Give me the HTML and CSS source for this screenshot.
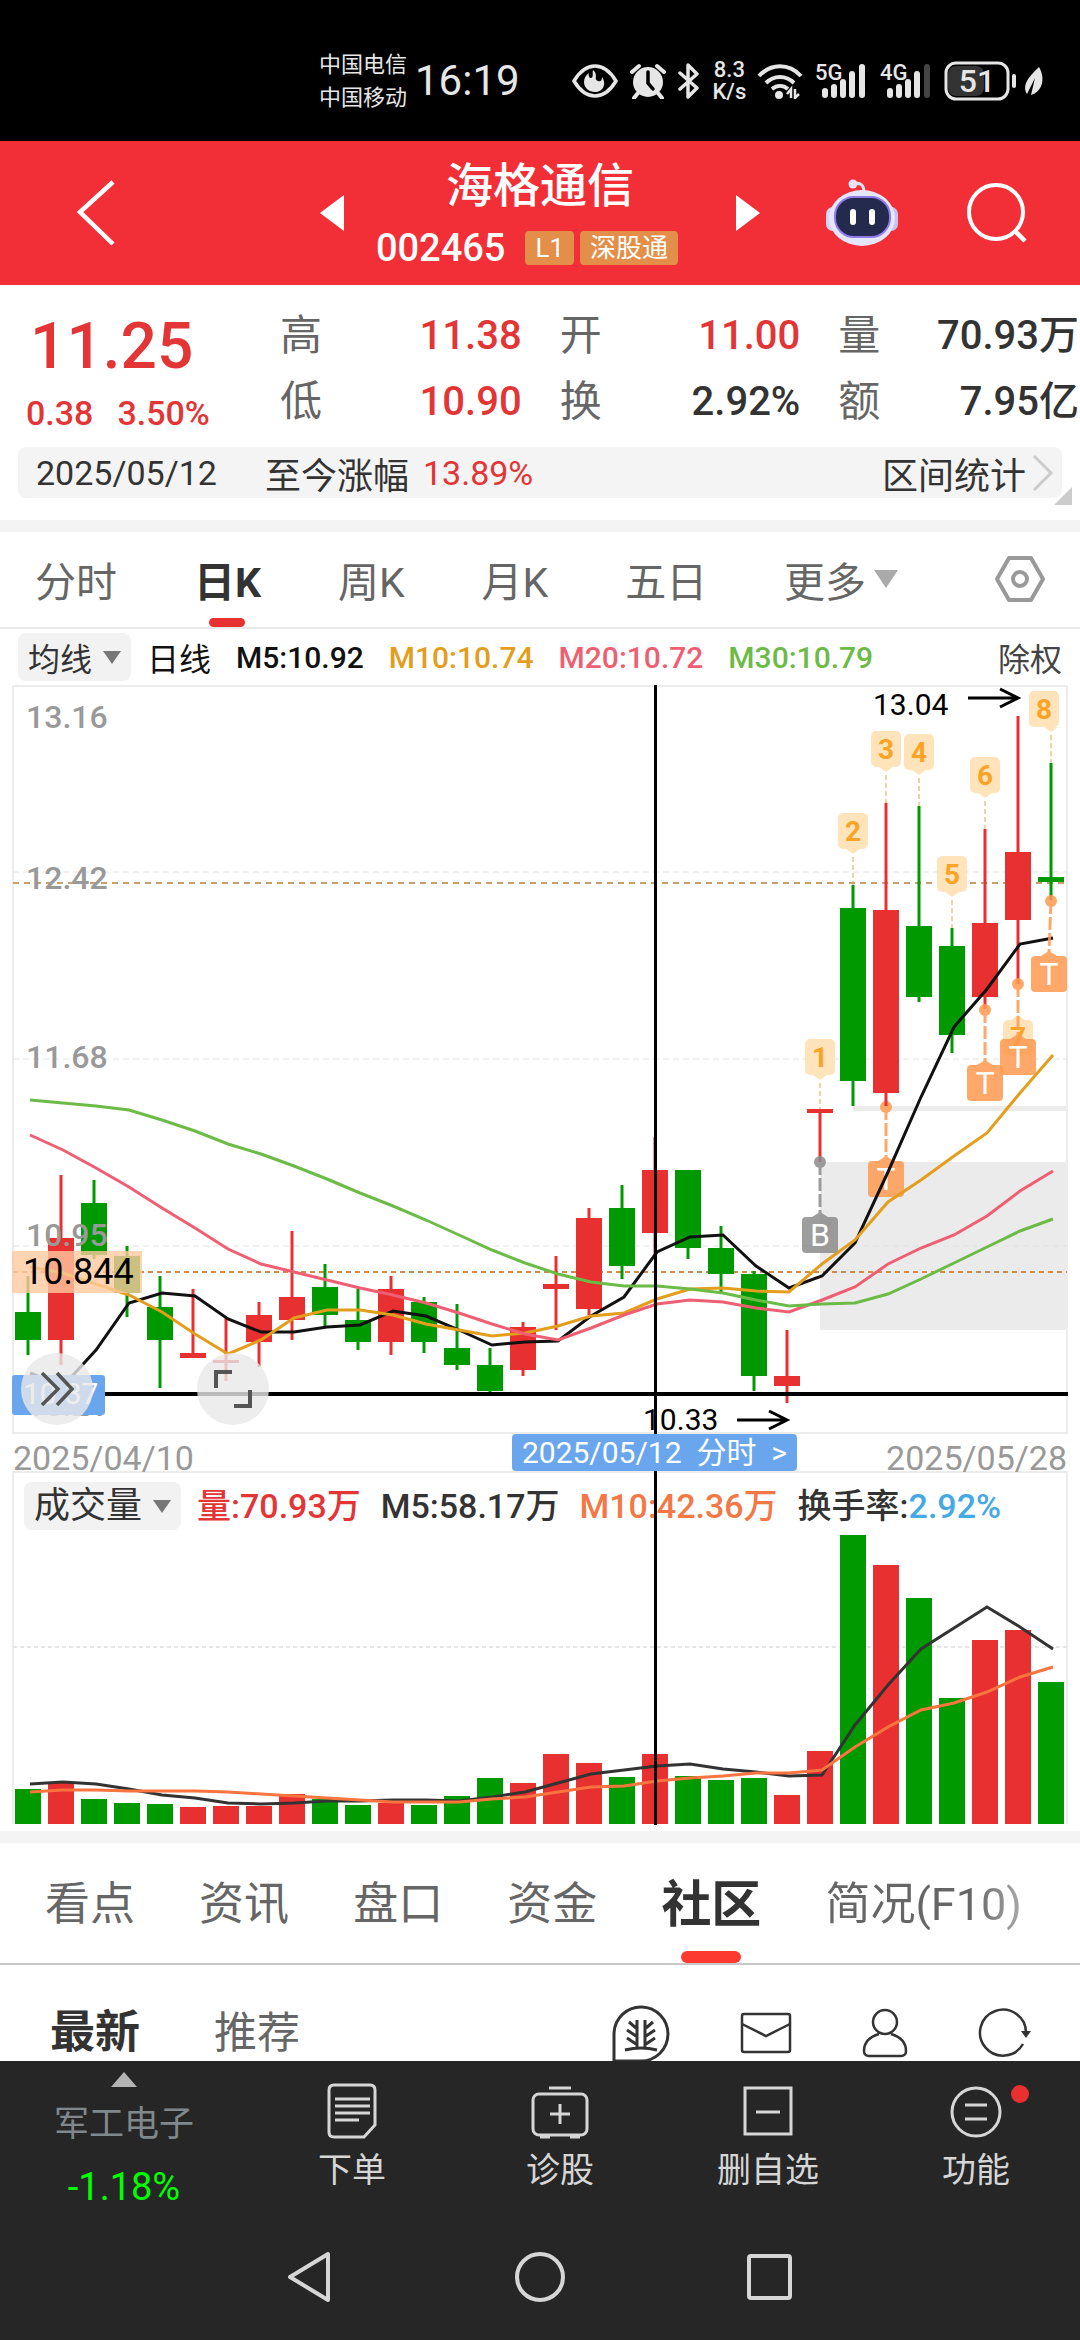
FILE: index.html
```html
<!DOCTYPE html>
<html lang="zh-CN">
<head>
    <meta charset="UTF-8">
    <meta name="viewport" content="width=device-width, initial-scale=1.0">
    <title>海格通信 002465</title>
    <link rel="stylesheet" href="styles.css">
</head>
<body>
    <div class="status">
        <div class="carriers"><span>中国电信</span><span>中国移动</span></div>
        <span class="clock">16:19</span>
        <div class="status-icons">
            <svg width="46" height="36" viewBox="0 0 46 36">
                <path d="M2 18C8 8 15 3 23 3s15 5 21 15c-6 10-13 15-21 15S8 28 2 18z" fill="none" stroke="#e6e6e6" stroke-width="3.5"/>
                <path d="M21 7c6 5 0 9 5 11 3 1 4-1 4-4 5 7 1 15-7 15-6 0-11-4-11-10 0-4 2-7 5-9-1 4 1 5 2 5 3-1 1-5 2-8z" fill="#e6e6e6"/>
            </svg>
            <svg width="38" height="36" viewBox="0 0 38 36">
                <circle cx="19" cy="19" r="15" fill="#e6e6e6"/>
                <path d="M3 9l7-6M35 9l-7-6M9 30l-4 5M29 30l4 5" stroke="#e6e6e6" stroke-width="4" stroke-linecap="round"/>
                <path d="M19 9v11l5 6" fill="none" stroke="#000" stroke-width="3.5" stroke-linecap="round"/>
            </svg>
            <svg width="24" height="36" viewBox="0 0 24 36">
                <path d="M3 10l17 15-9 9V2l9 9L3 26" fill="none" stroke="#e6e6e6" stroke-width="3.5" stroke-linejoin="round" stroke-linecap="round"/>
            </svg>
            <div class="speed"><span>8.3</span><span>K/s</span></div>
            <svg width="46" height="36" viewBox="0 0 46 36">
                <path d="M2 13c12-13 30-13 42 0M9 20c8-8 20-8 28 0M15 26c5-4 11-4 16 0" fill="none" stroke="#e6e6e6" stroke-width="4"/>
                <circle cx="22" cy="32" r="4" fill="#e6e6e6"/>
                <path d="M30 31l4-5v9M38 26v9l4-4" fill="none" stroke="#e6e6e6" stroke-width="2.5"/>
            </svg>
            <svg width="54" height="44" viewBox="0 -4 54 44">
                <text class="net" x="1" y="17">5G</text>
                <path d="M11 28v4M20 24v8M29 19v13M38 11v21M48 4v28" stroke="#e6e6e6" stroke-width="6" stroke-linecap="round"/>
            </svg>
            <svg width="54" height="44" viewBox="0 -4 54 44">
                <text class="net" x="1" y="17">4G</text>
                <path d="M11 28v4M20 24v8M29 19v13M38 11v21" stroke="#e6e6e6" stroke-width="6" stroke-linecap="round"/>
                <path d="M48 4v28" stroke="#444" stroke-width="6" stroke-linecap="round"/>
            </svg>
            <svg width="102" height="40" viewBox="0 0 102 40">
                <rect x="4" y="5" width="36" height="30" rx="8" fill="#333"/>
                <rect x="2" y="2" width="62" height="36" rx="10" fill="none" stroke="#e6e6e6" stroke-width="3"/>
                <text class="battery" x="33" y="31">51</text>
                <path d="M70 15v10" stroke="#e6e6e6" stroke-width="4" stroke-linecap="round"/>
                <path d="M95 6c7 12 3 25-8 28l4-17-8 16c-6-10 4-19 12-27z" fill="#e6e6e6"/>
            </svg>
        </div>
    </div>

    <header class="header">
        <button class="icon-btn back" aria-label="返回">
            <svg width="40" height="68" viewBox="0 0 40 68"><path d="M37 3L4 33l33 32" fill="none" stroke="#fff" stroke-width="4.5"/></svg>
        </button>
        <div class="stock">
            <button class="icon-btn" aria-label="上一只">
                <svg width="24" height="36" viewBox="0 0 24 36"><path d="M24 0v36L0 18z" fill="#fff"/></svg>
            </button>
            <div class="stock-name">
                <h1>海格通信</h1>
                <div class="stock-code">002465 <span class="tag">L1</span><span class="tag">深股通</span></div>
            </div>
            <button class="icon-btn" aria-label="下一只">
                <svg width="24" height="36" viewBox="0 0 24 36"><path d="M0 0v36l24-18z" fill="#fff"/></svg>
            </button>
        </div>
        <div class="header-tools">
            <button class="icon-btn" aria-label="智能助手">
                <svg width="72" height="68" viewBox="0 0 72 68">
                    <path d="M28 5c6-2 10 1 10 8" fill="none" stroke="#e3defa" stroke-width="3"/>
                    <circle cx="27" cy="5" r="4.5" fill="#e9e4fb"/>
                    <rect x="0" y="28" width="14" height="24" rx="7" fill="#d9d5f7"/>
                    <rect x="58" y="28" width="14" height="24" rx="7" fill="#c9c3f3"/>
                    <ellipse cx="36" cy="39" rx="33" ry="28" fill="#e6e6fb"/>
                    <rect x="9" y="18" width="55" height="40" rx="19" fill="#242a4e" stroke="#8d7bea" stroke-width="2"/>
                    <path d="M27 33v10M46 33v10" stroke="#fff" stroke-width="6" stroke-linecap="round"/>
                </svg>
            </button>
            <button class="icon-btn" aria-label="搜索">
                <svg width="62" height="62" viewBox="0 0 62 62"><circle cx="30" cy="30" r="27" fill="none" stroke="#fff" stroke-width="4"/><path d="M48 48l11 11" stroke="#fff" stroke-width="4.5"/></svg>
            </button>
        </div>
    </header>

    <main class="content">
        <section class="quote">
            <div class="price">
                <strong>11.25</strong>
                <div class="change"><span>0.38</span><span>3.50%</span></div>
            </div>
            <dl class="figures">
                <div><dt>高</dt><dd class="up">11.38</dd></div>
                <div><dt>开</dt><dd class="up">11.00</dd></div>
                <div><dt>量</dt><dd>70.93万</dd></div>
                <div><dt>低</dt><dd class="up">10.90</dd></div>
                <div><dt>换</dt><dd>2.92%</dd></div>
                <div><dt>额</dt><dd>7.95亿</dd></div>
            </dl>
        </section>
        <div class="range">
            <span class="date">2025/05/12</span>
            <span>至今涨幅</span>
            <span class="up rate">13.89%</span>
            <button class="range-btn">区间统计
                <svg width="22" height="38" viewBox="0 0 22 38"><path d="M2 2l17 17L2 36" fill="none" stroke="#ccc" stroke-width="3"/></svg>
            </button>
            <svg class="corner" width="18" height="18" viewBox="0 0 18 18"><path d="M18 0v18H0z" fill="#ccc"/></svg>
        </div>

        <nav class="tabs">
            <button>分时</button>
            <button class="active">日K</button>
            <button>周K</button>
            <button>月K</button>
            <button>五日</button>
            <button>更多<svg width="24" height="18" viewBox="0 0 24 18"><path d="M0 0h24L12 18z" fill="#aaa"/></svg></button>
            <button class="setting" aria-label="设置">
                <svg width="50" height="46" viewBox="0 0 50 46"><path d="M14 2h22l12 21-12 21H14L2 23z" fill="none" stroke="#999" stroke-width="4" stroke-linejoin="round"/><circle cx="25" cy="23" r="7" fill="none" stroke="#999" stroke-width="4"/></svg>
            </button>
        </nav>

        <section class="charts">
            <div class="legend">
                <button class="picker">均线<svg width="18" height="13" viewBox="0 0 18 13"><path d="M0 0h18L9 13z" fill="#777"/></svg></button>
                <span class="name">日线</span>
                <span class="m5">M5:10.92</span>
                <span class="m10">M10:10.74</span>
                <span class="m20">M20:10.72</span>
                <span class="m30">M30:10.79</span>
                <button class="rights">除权</button>
            </div>
            <svg id="kline" class="kline" viewBox="0 685 1080 749"></svg>
            <div class="dates">
                <span>2025/04/10</span>
                <span>2025/05/28</span>
                <button class="date-tag">2025/05/12 &nbsp;分时 &nbsp;&gt;</button>
            </div>
            <div class="volume">
                <div class="volume-legend">
                    <button class="picker">成交量<svg width="18" height="13" viewBox="0 0 18 13"><path d="M0 0h18L9 13z" fill="#777"/></svg></button>
                    <span class="up">量:70.93万</span>
                    <span>M5:58.17万</span>
                    <span class="v10">M10:42.36万</span>
                    <span>换手率:<span class="turnover">2.92%</span></span>
                </div>
            </div>
            <svg id="vol" class="vol" viewBox="0 1533 1080 292"></svg>
            <div class="crosshair"></div>
            <button class="round forward" aria-label="前进">
                <svg width="34" height="36" viewBox="0 0 34 36"><path d="M2 2l16 16L2 34M17 2l15 16-15 16" fill="none" stroke="#555" stroke-width="3.5"/></svg>
            </button>
            <button class="round expand" aria-label="全屏">
                <svg width="38" height="38" viewBox="0 0 38 38"><path d="M2 18V2h16M36 20v16H20" fill="none" stroke="#555" stroke-width="4"/></svg>
            </button>
        </section>

        <nav class="tabs info-tabs">
            <button>看点</button>
            <button>资讯</button>
            <button>盘口</button>
            <button>资金</button>
            <button class="active">社区</button>
            <button class="fade">简况(F10)</button>
        </nav>

        <div class="community">
            <button class="active">最新</button>
            <button>推荐</button>
            <div class="community-icons">
                <button class="icon-btn" aria-label="发布">
                    <svg width="58" height="58" viewBox="0 0 58 58" fill="none" stroke="#333" stroke-width="3">
                        <path d="M2 57V29a27 27 0 1 1 27 28z"/>
                        <path d="M25 16v27M33 16v27M24 24l-7-6M24 32l-9-6M24 40l-9-6M34 24l7-6M34 32l9-6M34 40l9-6M13 46q16-4 32 0"/>
                    </svg>
                </button>
                <button class="icon-btn" aria-label="消息">
                    <svg width="52" height="42" viewBox="0 0 52 42" fill="none" stroke="#333" stroke-width="2.5"><rect x="2" y="2" width="48" height="38" rx="2"/><path d="M2 12l24 12 24-12"/></svg>
                </button>
                <button class="icon-btn" aria-label="我的">
                    <svg width="46" height="50" viewBox="0 0 46 50" fill="none" stroke="#333" stroke-width="2.5"><circle cx="23" cy="14" r="12"/><path d="M17 26C7 29 2 35 2 43c0 3 2 5 5 5h32c3 0 5-2 5-5 0-8-5-14-15-17"/></svg>
                </button>
                <button class="icon-btn" aria-label="刷新">
                    <svg width="54" height="50" viewBox="0 0 54 50"><path d="M45 36A23 23 0 1 1 48 25" fill="none" stroke="#333" stroke-width="2.5"/><path d="M43 23h10l-5 7z" fill="#333"/></svg>
                </button>
            </div>
        </div>
    </main>

    <footer class="footer">
        <div class="actions">
            <button class="sector">
                <svg width="26" height="15" viewBox="0 0 26 15"><path d="M13 0l13 15H0z" fill="#b4b4b4"/></svg>
                <span class="sector-name">军工电子</span>
                <span class="sector-rate">-1.18%</span>
            </button>
            <button>
                <svg width="58" height="56" viewBox="0 0 58 56" fill="none" stroke="#d6d6d6" stroke-width="3"><path d="M11 2h36q5 0 5 5v35l-11 12H11q-5 0-5-5V7q0-5 5-5z"/><path d="M12 16h35M12 23h35M12 30h35M12 37h24"/></svg>
                下单
            </button>
            <button>
                <svg width="58" height="56" viewBox="0 0 58 56" fill="none" stroke="#d6d6d6" stroke-width="3"><rect x="2" y="11" width="54" height="41" rx="6"/><path d="M18 5h22M29 21v20M19 31h20M9 54h10M39 54h10"/></svg>
                诊股
            </button>
            <button>
                <svg width="58" height="56" viewBox="0 0 58 56" fill="none" stroke="#d6d6d6" stroke-width="3"><rect x="6" y="5" width="46" height="46"/><path d="M17 29h24"/></svg>
                删自选
            </button>
            <button class="more">
                <svg width="58" height="56" viewBox="0 0 58 56" fill="none" stroke="#d6d6d6" stroke-width="3"><circle cx="29" cy="29" r="24"/><path d="M18 22h22M18 36h22"/></svg>
                功能
            </button>
        </div>
        <div class="system-nav">
            <button class="icon-btn" aria-label="返回"><svg width="52" height="52" viewBox="0 0 52 52"><path d="M43 3v46L5 26z" fill="none" stroke="#d6d6d6" stroke-width="4" stroke-linejoin="round"/></svg></button>
            <button class="icon-btn" aria-label="主页"><svg width="52" height="52" viewBox="0 0 52 52"><circle cx="26" cy="26" r="23" fill="none" stroke="#d6d6d6" stroke-width="4"/></svg></button>
            <button class="icon-btn" aria-label="最近任务"><svg width="52" height="52" viewBox="0 0 52 52"><rect x="6" y="5" width="41" height="42" rx="2" fill="none" stroke="#d6d6d6" stroke-width="4"/></svg></button>
        </div>
    </footer>
    <script src="chart.js"></script>
</body>
</html>
```
FILE: styles.css
```css
* {
    box-sizing: border-box;
}
body {
    margin: 0;
    height: 100vh;
    display: flex;
    flex-direction: column;
    overflow: hidden;
    font-family: Roboto, "Noto Sans CJK SC", sans-serif;
    color: #333;
    background-color: #fff;
}
button {
    padding: 0;
    border: none;
    background: none;
    font: inherit;
    color: inherit;
    cursor: pointer;
}
svg {
    display: block;
}
h1, dl, dd {
    margin: 0;
}
.up {
    color: #e33535;
}
.icon-btn {
    display: flex;
}

/* 状态栏 */
.status {
    display: flex;
    align-items: center;
    flex: none;
    height: 141px;
    padding: 20px 34px 0 319px;
    background-color: #000;
    color: #e6e6e6;
}
.carriers {
    display: flex;
    flex-direction: column;
    font-size: 22px;
    line-height: 33px;
}
.clock {
    margin-left: 8px;
    font-size: 42px;
}
.status-icons {
    display: flex;
    align-items: center;
    justify-content: space-between;
    flex: 1;
    margin-left: 52px;
}
.speed {
    display: flex;
    flex-direction: column;
    align-items: center;
    font-size: 22px;
    font-weight: 500;
    line-height: 22px;
}
.net {
    font-size: 22px;
    font-weight: 500;
    fill: #e6e6e6;
}
.battery {
    font-size: 32px;
    font-weight: 500;
    text-anchor: middle;
    fill: #e6e6e6;
}

/* 标题栏 */
.header {
    display: grid;
    grid-template-columns: 1fr 440px 1fr;
    align-items: center;
    flex: none;
    height: 144px;
    padding: 0 52px;
    background-color: #f22f37;
    color: #fff;
}
.back {
    padding-left: 24px;
}
.stock {
    display: flex;
    align-items: center;
    justify-content: space-between;
}
.stock-name {
    display: flex;
    flex-direction: column;
    align-items: center;
    padding-top: 4px;
}
h1 {
    font-size: 47px;
    line-height: 66px;
    font-weight: 500;
}
.stock-code {
    display: flex;
    align-items: center;
    gap: 6px;
    padding-right: 26px;
    font-size: 38px;
    line-height: 58px;
    font-weight: 500;
}
.tag {
    padding: 0 10px;
    border-radius: 4px;
    background-color: #e38f49;
    font-size: 26px;
    line-height: 34px;
    font-weight: 400;
}
.tag:first-of-type {
    margin-left: 14px;
}
.header-tools {
    display: flex;
    align-items: center;
    justify-content: flex-end;
    gap: 68px;
}

/* 行情 */
.content {
    flex: 1;
    min-height: 0;
    overflow: hidden;
}
.quote {
    display: flex;
    padding: 18px 1px 12px 26px;
}
.price {
    width: 254px;
    color: #e33535;
}
.price strong {
    display: block;
    padding-left: 4px;
    font-size: 64px;
    line-height: 88px;
    font-weight: 500;
}
.change {
    display: flex;
    gap: 24px;
    font-size: 34px;
    line-height: 44px;
    font-weight: 500;
}
.figures {
    flex: 1;
    display: grid;
    grid-template-columns: 241fr 240fr 240fr;
    column-gap: 38px;
    font-size: 40px;
    line-height: 66px;
}
.figures div {
    display: flex;
    justify-content: space-between;
}
.figures dt {
    color: #666;
    font-size: 42px;
}
.figures dd {
    font-weight: 500;
}
.range {
    position: relative;
    display: flex;
    align-items: center;
    height: 51px;
    margin: 0 18px 22px;
    padding: 0 8px 0 18px;
    border-radius: 8px;
    background-color: #f4f4f4;
    font-size: 36px;
}
.date {
    margin-right: 48px;
    font-size: 34px;
}
.rate {
    margin-left: 14px;
    font-size: 34px;
}
.range-btn {
    display: flex;
    align-items: center;
    gap: 6px;
    margin-left: auto;
}
.corner {
    position: absolute;
    right: -10px;
    bottom: -7px;
}

/* 标签页 */
.tabs {
    display: flex;
    align-items: center;
    justify-content: space-between;
    height: 109px;
    padding: 0 35px;
    border-top: 12px solid #f4f4f4;
    border-bottom: 2px solid #e8e8e8;
    color: #666;
    font-size: 41px;
}
.tabs button {
    position: relative;
    display: flex;
    align-items: center;
    gap: 8px;
    height: 100%;
    padding-bottom: 2px;
}
.tabs .active {
    color: #333;
    font-weight: 700;
}
.tabs .active::after {
    content: "";
    position: absolute;
    left: 50%;
    bottom: 0;
    width: 36px;
    height: 9px;
    margin-left: -18px;
    border-radius: 5px;
    background-color: #e83030;
}
.tabs .setting {
    margin-left: 20px;
}

/* 图表 */
.charts {
    position: relative;
}
.legend {
    display: flex;
    align-items: center;
    gap: 25px;
    height: 56px;
    padding: 0 18px;
    font-size: 30px;
    font-weight: 500;
    color: #111;
}
.picker {
    display: flex;
    align-items: center;
    gap: 11px;
    height: 48px;
    padding: 0 10px;
    border-radius: 8px;
    background-color: #f2f2f2;
    color: #333;
    font-size: 32px;
    font-weight: 400;
}
.name {
    margin-left: -9px;
    font-size: 32px;
    font-weight: 400;
}
.m10 {
    color: #e39e1d;
}
.m20 {
    color: #ef5f73;
}
.m30 {
    color: #6dbb47;
}
.rights {
    margin-left: auto;
    color: #444;
    font-size: 32px;
    font-weight: 400;
}
.kline, .vol {
    width: 100%;
    height: auto;
}
.dates {
    position: relative;
    display: flex;
    justify-content: space-between;
    height: 37px;
    padding: 0 13px;
    color: #999;
    font-size: 34px;
    line-height: 48px;
}
.date-tag {
    position: absolute;
    z-index: 2;
    left: 47.4%;
    top: 0;
    height: 37px;
    padding: 0 10px;
    border-radius: 4px;
    background-color: #6aa6ee;
    color: #fff;
    font-size: 30px;
    line-height: 37px;
    white-space: pre;
}
.volume {
    margin: 0 12px;
    padding: 9px 10px 3px;
    border: 2px solid #ececec;
    border-bottom: none;
}
.volume-legend {
    display: flex;
    align-items: center;
    gap: 20px;
    font-size: 34px;
    line-height: 48px;
    font-weight: 500;
    white-space: nowrap;
}
.volume-legend .picker {
    margin-right: -4px;
    font-size: 36px;
}
.v10 {
    color: #f47845;
}
.turnover {
    color: #45a9e6;
}
.crosshair {
    position: absolute;
    left: 60.6%;
    top: 56px;
    bottom: 0;
    width: 3px;
    background-color: #000;
}
.round {
    position: absolute;
    display: flex;
    align-items: center;
    justify-content: center;
    width: 72px;
    height: 72px;
    top: 724px;
    border-radius: 50%;
    background-color: rgba(232, 232, 232, 0.8);
}
.forward {
    left: 21px;
}
.expand {
    left: 197px;
}
.axis {
    font-size: 32px;
    font-weight: 500;
    fill: #999;
}
.point {
    font-size: 30px;
    fill: #000;
}
.avg-price {
    font-size: 36px;
    fill: #000;
}
.cursor-price {
    font-size: 30px;
    fill: #fff;
}
.flag {
    font-size: 28px;
    font-weight: 700;
    text-anchor: middle;
    fill: #f9a426;
}
.trade {
    font-size: 32px;
    text-anchor: middle;
    fill: #fff;
}

/* 资讯标签 */
.info-tabs {
    height: 134px;
    margin-top: 6px;
    padding: 0 58px 0 45px;
    border-bottom-color: #c8c8c8;
    font-size: 45px;
}
.info-tabs button {
    padding-bottom: 6px;
}
.info-tabs .active {
    font-size: 50px;
}
.info-tabs .active::after {
    width: 60px;
    height: 12px;
    margin-left: -30px;
    border-radius: 6px;
    background-color: #fd3a30;
}
.fade {
    background-image: linear-gradient(90deg, #666 75%, #aaa);
    background-clip: text;
    color: transparent;
}
.community {
    display: flex;
    align-items: center;
    gap: 74px;
    padding: 36px 48px 0 50px;
    color: #666;
    font-size: 43px;
    line-height: 64px;
}
.community .active {
    color: #333;
    font-size: 45px;
    font-weight: 700;
}
.community-icons {
    display: flex;
    align-items: center;
    gap: 70px;
    margin-left: auto;
}

/* 底部 */
.footer {
    flex: none;
    background-color: #262626;
    color: #d6d6d6;
}
.actions {
    display: grid;
    grid-template-columns: 248fr 208fr 208fr 208fr 208fr;
    height: 151px;
    font-size: 34px;
    line-height: 48px;
}
.actions button {
    position: relative;
    display: flex;
    flex-direction: column;
    align-items: center;
    padding-top: 22px;
    gap: 7px;
}
.actions .sector {
    padding-top: 11px;
    gap: 14px;
}
.sector-name {
    color: #80888c;
    font-size: 35px;
}
.sector-rate {
    color: #0f0;
    font-size: 38px;
}
.more::after {
    content: "";
    position: absolute;
    left: 66%;
    top: 24px;
    width: 18px;
    height: 18px;
    margin-left: 2px;
    border-radius: 50%;
    background-color: #e83030;
}
.system-nav {
    display: flex;
    justify-content: center;
    gap: 177px;
    padding: 39px 0 37px;
}
```
FILE: chart.js
```js
const UP = '#e83030';
const DOWN = '#009900';
const STEP = 33;
const FIRST = 28;
const BAR = 26;

// [最高, 实体上沿, 实体下沿, 最低, 涨=1 跌=0, 成交量柱顶]
const candles = [
    [1276, 1312, 1340, 1355, 0, 1789], [1175, 1238, 1340, 1365, 1, 1782],
    [1180, 1203, 1255, 1259, 0, 1799], [1246, 1256, 1293, 1317, 0, 1803],
    [1276, 1307, 1340, 1388, 0, 1804], [1289, 1353, 1358, 1358, 1, 1807],
    [1317, 1360, 1363, 1381, 1, 1806], [1302, 1315, 1342, 1367, 1, 1806],
    [1231, 1297, 1320, 1340, 1, 1794], [1264, 1287, 1315, 1326, 0, 1799],
    [1289, 1320, 1342, 1350, 0, 1805], [1276, 1289, 1342, 1355, 1, 1803],
    [1297, 1302, 1342, 1353, 0, 1805], [1304, 1348, 1365, 1370, 0, 1796],
    [1348, 1365, 1391, 1393, 0, 1778], [1322, 1327, 1370, 1376, 1, 1783],
    [1256, 1284, 1289, 1330, 1, 1754], [1208, 1218, 1309, 1315, 1, 1763],
    [1185, 1208, 1266, 1279, 0, 1777], [1137, 1170, 1233, 1258, 1, 1754],
    [1170, 1170, 1248, 1259, 0, 1776], [1226, 1248, 1274, 1292, 0, 1780],
    [1271, 1274, 1376, 1391, 0, 1778], [1330, 1376, 1386, 1403, 1, 1795],
    [1109, 1109, 1113, 1162, 1, 1751], [885, 908, 1081, 1106, 0, 1535],
    [803, 910, 1093, 1106, 1, 1565], [806, 926, 997, 1002, 0, 1598],
    [928, 946, 1035, 1053, 0, 1698], [829, 923, 997, 1009, 1, 1640],
    [716, 852, 920, 984, 1, 1630], [763, 877, 882, 900, 0, 1682]
];

const averages = [
    ['#111', [1373, 1386, 1350, 1303, 1293, 1296, 1319, 1332, 1332, 1327, 1325, 1311, 1316, 1330, 1345, 1342, 1341, 1316, 1297, 1252, 1237, 1235, 1266, 1288, 1276, 1243, 1172, 1097, 1027, 989, 944, 938]],
    ['#e39e1d', [1267, 1273, 1284, 1295, 1312, 1334, 1354, 1340, 1318, 1310, 1310, 1315, 1324, 1330, 1336, 1333, 1326, 1316, 1313, 1299, 1289, 1288, 1291, 1292, 1264, 1240, 1202, 1180, 1156, 1133, 1093, 1055]],
    ['#ef5f73', [1135, 1150, 1168, 1187, 1208, 1228, 1249, 1264, 1272, 1280, 1288, 1295, 1303, 1313, 1324, 1334, 1340, 1328, 1315, 1304, 1300, 1302, 1308, 1312, 1300, 1287, 1264, 1248, 1235, 1216, 1191, 1171]],
    ['#6dbb47', [1100, 1103, 1106, 1110, 1120, 1131, 1144, 1154, 1166, 1179, 1193, 1206, 1220, 1235, 1250, 1263, 1274, 1282, 1286, 1286, 1289, 1293, 1300, 1306, 1304, 1303, 1294, 1279, 1263, 1247, 1231, 1219]]
];

const volumeAverages = [
    ['#333', [1784, 1782, 1784, 1789, 1795, 1798, 1803, 1804, 1803, 1801, 1801, 1800, 1800, 1801, 1797, 1792, 1783, 1774, 1770, 1766, 1764, 1769, 1772, 1776, 1775, 1725, 1685, 1649, 1628, 1607, 1627, 1649]],
    ['#f9743f', [1792, 1790, 1790, 1791, 1791, 1791, 1792, 1794, 1796, 1798, 1800, 1802, 1802, 1802, 1799, 1797, 1792, 1787, 1786, 1781, 1778, 1776, 1773, 1773, 1770, 1747, 1727, 1710, 1703, 1692, 1677, 1667]]
];

const cx = i => FIRST + STEP * i;

function rect(x, y, w, h, fill, extra = '') {
    return `<rect x="${x}" y="${y}" width="${w}" height="${h}" fill="${fill}" ${extra}/>`;
}

function line(x1, y1, x2, y2, color, width, extra = '') {
    return `<line x1="${x1}" y1="${y1}" x2="${x2}" y2="${y2}" stroke="${color}" stroke-width="${width}" ${extra}/>`;
}

function curve([color, ys]) {
    const points = ys.map((y, i) => `${cx(i) + 2},${y}`).join(' ');
    return `<polyline points="${points}" fill="none" stroke="${color}" stroke-width="3"/>`;
}

function label(cls, x, y, text) {
    return `<text class="${cls}" x="${x}" y="${y}">${text}</text>`;
}

function arrow(x, y) {
    return `<path d="M${x} ${y}h50M${x + 32} ${y - 9}l18 9-18 9" fill="none" stroke="#000" stroke-width="3"/>`;
}

// 九转序列数字
function flag(i, top, n, shift = 0) {
    const x = cx(i);
    const high = candles[i][0];
    return rect(x + shift - 15, top, 30, 36, '#ffe3bb', 'rx="5"')
        + `<path d="M${x - 7} ${top + 36}h14l-7 5z" fill="#ffe3bb"/>`
        + line(x, top + 44, x, high, '#dba84f', 1, 'stroke-dasharray="5 3"')
        + label('flag', x + shift, top + 28, n);
}

// 买卖点
function trade(i, dot, top, text, color, shift = 0) {
    const x = cx(i);
    return `<g opacity="0.85"><circle cx="${x}" cy="${dot}" r="6" fill="${color}"/>`
        + line(x, dot, x + shift, top - 4, color, 3, 'stroke-dasharray="13 3"')
        + `<path d="M${x + shift - 8} ${top}l8-5 8 5z" fill="${color}"/>`
        + rect(x + shift - 18, top, 36, 36, color, 'rx="4"') + '</g>'
        + label('trade', x + shift, top + 29, text);
}

function drawKline() {
    let s = '';
    s += rect(820, 1162, 247, 168, '#ebebeb') + rect(853, 1106, 214, 5, '#ebebeb');
    s += rect(13, 686, 1054, 747, 'none', 'stroke="#ececec" stroke-width="2"');
    [872, 1059, 1246].forEach(y => {
        s += line(13, y, 1067, y, '#e2e2e2', 1, 'stroke-dasharray="6 4"');
    });
    s += line(13, 883, 1067, 883, '#c8a070', 2, 'stroke-dasharray="6 5"');
    s += line(13, 1272, 1067, 1272, '#d3894a', 2, 'stroke-dasharray="5 4"');
    s += trade(26, 1107, 1161, 'T', '#ff9a50');
    candles.forEach(([high, top, bottom, low, up], i) => {
        const color = up ? UP : DOWN;
        s += line(cx(i), high, cx(i), low, color, 3);
        s += rect(cx(i) - BAR / 2, top, BAR, bottom - top, color);
    });
    s += label('axis', 26, 728, '13.16') + label('axis', 26, 889, '12.42')
        + label('axis', 26, 1068, '11.68') + label('axis', 26, 1246, '10.95')
        + label('axis', 26, 1416, '10.21');
    s += averages.map(curve).join('');
    s += flag(24, 1039, 1) + flag(25, 813, 2) + flag(26, 731, 3) + flag(27, 734, 4)
        + flag(28, 856, 5) + flag(29, 757, 6) + flag(31, 691, 8, -7);
    s += rect(cx(30) - 15, 1020, 30, 36, '#ffe3bb', 'rx="5"')
        + `<path d="M${cx(30) - 7} 1020h14l-7-5z" fill="#ffe3bb"/>` + label('flag', cx(30), 1047, 7);
    s += trade(24, 1162, 1217, 'B', '#8c8c8c') + trade(29, 1010, 1065, 'T', '#ff9a50')
        + trade(30, 984, 1039, 'T', '#ff9a50') + trade(31, 901, 956, 'T', '#ff9a50', -2);
    s += line(12, 1394, 1068, 1394, '#000', 4);
    s += rect(12, 1251, 130, 42, '#ffc9a0', 'opacity="0.8"') + label('avg-price', 23, 1284, '10.844');
    s += rect(12, 1375, 93, 40, '#6aa6ee', 'rx="3"') + label('cursor-price', 23, 1404, '10.37');
    s += label('point', 873, 715, '13.04') + arrow(968, 698);
    s += label('point', 643, 1430, '10.33') + arrow(737, 1420);
    document.getElementById('kline').innerHTML = s;
}

function drawVolume() {
    let s = line(13, 1533, 13, 1824, '#ececec', 2) + line(1067, 1533, 1067, 1824, '#ececec', 2)
        + line(13, 1647, 1067, 1647, '#e6e6e6', 2, 'stroke-dasharray="4 3"');
    candles.forEach(([, , , , up, top], i) => {
        s += rect(cx(i) - BAR / 2, top, BAR, 1824 - top, up ? UP : DOWN);
    });
    s += volumeAverages.map(curve).join('');
    document.getElementById('vol').innerHTML = s;
}

drawKline();
drawVolume();
```
